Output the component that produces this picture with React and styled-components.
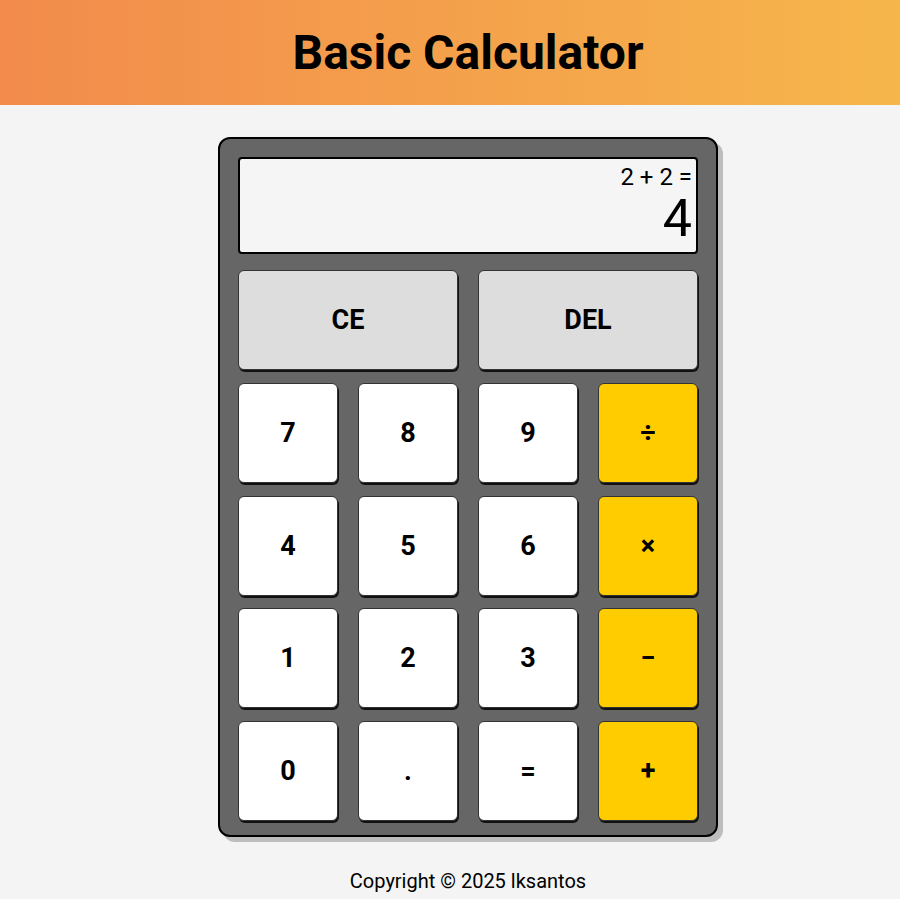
import { createGlobalStyle, styled } from "styled-components";

const GlobalStyle = createGlobalStyle`
  body {
    margin: 0;
    background-color: #f4f4f4;
    font-family: Roboto, "Liberation Sans", sans-serif;
  }
`;

const keys = [
  { label: "7" },
  { label: "8" },
  { label: "9" },
  { label: "÷", op: true },
  { label: "4" },
  { label: "5" },
  { label: "6" },
  { label: "×", op: true },
  { label: "1" },
  { label: "2" },
  { label: "3" },
  { label: "−", op: true },
  { label: "0" },
  { label: "." },
  { label: "=" },
  { label: "+", op: true },
];

const App = () => {
  return (
    <>
      <GlobalStyle />
      <Header>
        <Title>Basic Calculator</Title>
      </Header>
      <Main>
        <Calculator>
          <Display>
            <Expression>2 + 2 =</Expression>
            <Result>4</Result>
          </Display>
          <Keys>
            <Key $variant="control" $wide>
              CE
            </Key>
            <Key $variant="control" $wide>
              DEL
            </Key>
            {keys.map((k) => (
              <Key key={k.label} $variant={k.op ? "operator" : "number"}>
                {k.label}
              </Key>
            ))}
          </Keys>
        </Calculator>
      </Main>
      <Footer>Copyright © 2025 lksantos</Footer>
    </>
  );
};
export default App;

// content sits a bit right of the page center in the original
const Header = styled.header`
  height: 105px;
  display: flex;
  align-items: center;
  justify-content: center;
  padding-left: 36px;
  background: linear-gradient(to right, #f28b4c, #f6b64b);
`;

const Title = styled.h1`
  margin: 0;
  font-size: 48px;
  font-weight: 700;
  color: #000;
`;

const Main = styled.main`
  display: flex;
  justify-content: center;
  padding-top: 32px;
  padding-left: 36px;
`;

const Calculator = styled.div`
  width: 460px;
  padding: 18px 18px 14px;
  background-color: #666666;
  border: 2px solid #000;
  border-radius: 12px;
  box-shadow: 5px 5px 0 #bdbdbd;
`;

const Display = styled.div`
  box-sizing: border-box;
  height: 97px;
  padding: 4px 4px;
  display: flex;
  flex-direction: column;
  align-items: flex-end;
  background-color: #f5f5f5;
  border: 2px solid #000;
  border-radius: 4px;
  margin-bottom: 16px;
`;

const Expression = styled.div`
  font-size: 24px;
  line-height: 28px;
  color: #000;
`;

const Result = styled.div`
  font-size: 52px;
  line-height: 56px;
  color: #000;
`;

const Keys = styled.div`
  display: grid;
  grid-template-columns: repeat(4, 1fr);
  grid-auto-rows: 100px;
  column-gap: 20px;
  row-gap: 12.75px;
`;

const colors = {
  control: "#dddddd",
  number: "#ffffff",
  operator: "#ffcc00",
};

const Key = styled.button`
  grid-column: ${(p) => (p.$wide ? "span 2" : "span 1")};
  display: flex;
  align-items: center;
  justify-content: center;
  font-family: Roboto, "Liberation Sans", sans-serif;
  font-size: 27px;
  font-weight: 700;
  color: #000;
  background-color: ${(p) => colors[p.$variant]};
  border: 1px solid #333;
  border-radius: 6px;
  box-shadow: 1px 2px 0 #111;
  cursor: pointer;
`;

const Footer = styled.footer`
  margin-top: 32px;
  padding-left: 36px;
  text-align: center;
  font-size: 20px;
  color: #000;
`;
